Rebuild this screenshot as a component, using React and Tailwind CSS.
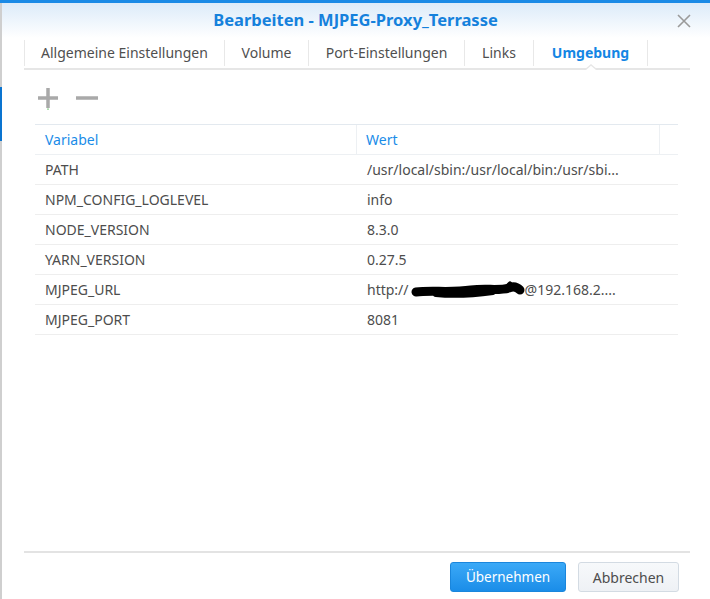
import React from "react";

const rows = [
  ["PATH", "/usr/local/sbin:/usr/local/bin:/usr/sbi..."],
  ["NPM_CONFIG_LOGLEVEL", "info"],
  ["NODE_VERSION", "8.3.0"],
  ["YARN_VERSION", "0.27.5"],
  ["MJPEG_URL", "URL"],
  ["MJPEG_PORT", "8081"],
];

const tabs = [
  { label: "Allgemeine Einstellungen", w: "w-[200px]" },
  { label: "Volume", w: "w-[84px]" },
  { label: "Port-Einstellungen", w: "w-[156px]" },
  { label: "Links", w: "w-[69px]" },
  { label: "Umgebung", w: "w-[115px]", active: true },
];

function Blob() {
  return (
    <svg width="114" height="18" viewBox="0 0 114 18" className="inline-block align-middle -mt-[2px] ml-[2px]">
      <path
        d="M5 11 C 20 9, 40 12, 60 9 C 75 7, 88 10, 98 7 C 102 5, 106 6, 109 9"
        stroke="#000"
        strokeWidth="9"
        strokeLinecap="round"
        fill="none"
      />
      <path d="M25 13 C 45 15, 60 14, 82 11" stroke="#000" strokeWidth="6" strokeLinecap="round" fill="none" />
      <path d="M94 8 L 99 3" stroke="#000" strokeWidth="5" strokeLinecap="round" fill="none" />
    </svg>
  );
}

export default function App() {
  return (
    <div
      className="w-[710px] h-[599px] bg-white flex flex-col overflow-hidden"
      style={{ fontFamily: '"Noto Sans", "Liberation Sans", sans-serif' }}
    >
      <div className="h-[3px] bg-[#1a8ae6] shrink-0" />
      <div className="flex flex-1 min-h-0">
        {/* left edge strip */}
        <div className="w-[2px] bg-[#cfcfcf] flex flex-col shrink-0">
          <div className="h-[84px]" />
          <div className="h-[54px] bg-[#0a74d0]" />
        </div>
        <div className="flex-1 flex flex-col min-w-0">
          {/* header */}
          <div className="h-[35px] bg-gradient-to-b from-[#dcebf9] to-white grid grid-cols-[1fr_auto_1fr] items-center shrink-0">
            <div />
            <div className="text-[16.5px] font-bold text-[#1581dc] leading-none -mt-[1px] -ml-[1px]">
              Bearbeiten - MJPEG-Proxy_Terrasse
            </div>
            <div className="flex justify-end pr-[19px]">
              <svg width="14" height="14" viewBox="0 0 14 14">
                <path d="M1 1 L13 13 M13 1 L1 13" stroke="#9a9a9a" strokeWidth="1.6" fill="none" />
              </svg>
            </div>
          </div>
          {/* tabs */}
          <div className="ml-[22px] mr-[20px] shrink-0">
            <div className="flex h-[30px] py-[2px]">
              {tabs.map((t, i) => (
                <div
                  key={t.label}
                  className={`${t.w} relative flex items-center justify-center border-l border-[#e8e8e8] ${i === tabs.length - 1 ? "border-r" : ""}`}
                >
                  <span
                    className={`text-[14px] -mt-[2px] ${t.active ? "font-bold text-[#1386e4]" : "text-[#4f4f4f]"}`}
                  >
                    {t.label}
                  </span>
                  {t.active && (
                    <svg
                      width="14"
                      height="6"
                      viewBox="0 0 14 6"
                      className="absolute left-1/2 -translate-x-1/2 bottom-[-4px]"
                    >
                      <path d="M0 6 L7 0 L14 6 Z" fill="#e6e6e6" />
                      <path d="M2 6 L7 1.8 L12 6 Z" fill="#ffffff" />
                    </svg>
                  )}
                </div>
              ))}
            </div>
            <div className="h-[2px] bg-[#e6e6e6]" />
          </div>
          {/* toolbar */}
          <div className="h-[54px] flex items-center gap-[18px] pl-[36px] shrink-0">
            <svg width="20" height="22" viewBox="0 0 20 22" className="mt-[4px]">
              <path d="M0 10 H20 M10 0 V20" stroke="#a9a9a9" strokeWidth="3.5" fill="none" />
              <rect x="9" y="20.5" width="2" height="1.2" fill="#8fd18f" />
            </svg>
            <svg width="22" height="20" viewBox="0 0 22 20" className="mt-[2px]">
              <path d="M0 10 H22" stroke="#a9a9a9" strokeWidth="3.5" fill="none" />
            </svg>
          </div>
          {/* table */}
          <div className="ml-[33px] w-[643px] border-t border-[#e3e9ef] shrink-0">
            <div className="flex h-[30px] border-b border-[#edf0f3] text-[14px] text-[#1a8ce8]">
              <div className="w-[322px] border-r border-[#edf0f3] pl-[10px] flex items-center">Variabel</div>
              <div className="w-[303px] border-r border-[#edf0f3] pl-[9px] flex items-center">Wert</div>
              <div className="flex-1" />
            </div>
            {rows.map(([k, v]) => (
              <div key={k} className="flex h-[30px] border-b border-[#eeeeee] text-[14px] text-[#4d4d4d]">
                <div className="w-[322px] pl-[10px] flex items-center">{k}</div>
                <div className="flex-1 pl-[10px] flex items-center whitespace-nowrap">
                  {v === "URL" ? (
                    <span>
                      http://
                      <Blob />
                      @192.168.2....
                    </span>
                  ) : (
                    v
                  )}
                </div>
              </div>
            ))}
          </div>
          <div className="flex-1" />
          {/* footer */}
          <div className="ml-[22px] mr-[20px] h-[2px] bg-[#e3e3e3] shrink-0" />
          <div className="h-[46px] flex items-start justify-end gap-[12px] pr-[31px] pt-[9px] shrink-0">
            <button className="w-[116px] h-[30px] rounded-[3px] bg-gradient-to-b from-[#3aa9f7] to-[#1a8de8] border border-[#1a86dc] text-white text-[13.5px] flex items-center justify-center">
              Übernehmen
            </button>
            <button className="w-[101px] h-[30px] rounded-[3px] bg-gradient-to-b from-[#f7f9fb] to-[#eef1f5] border border-[#d3dbe3] text-[#4d4d4d] text-[14px] flex items-center justify-center">
              Abbrechen
            </button>
          </div>
        </div>
      </div>
    </div>
  );
}
